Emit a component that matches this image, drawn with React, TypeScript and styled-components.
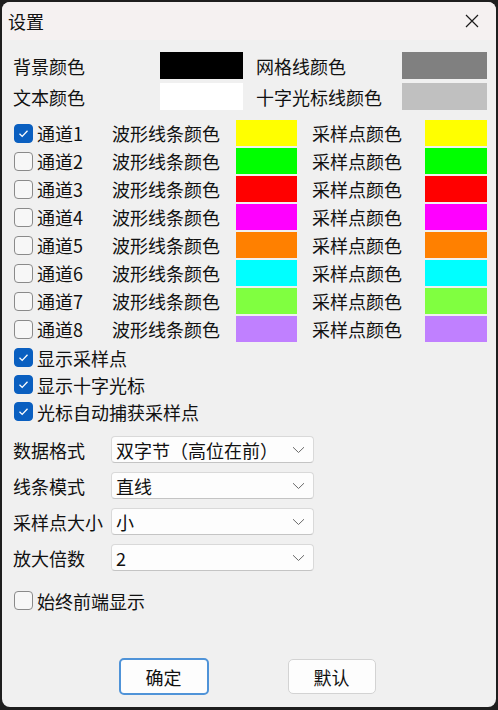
import React from "react";
import styled, { createGlobalStyle } from "styled-components";

const GlobalStyle = createGlobalStyle`
  html, body {
    margin: 0;
    padding: 0;
    background: #1e1e1e;
  }
  body {
    font-family: "Noto Sans CJK SC", "Noto Sans", sans-serif;
    color: #111111;
  }
  * { box-sizing: border-box; }
`;

const Page = styled.div`
  width: 498px;
  height: 710px;
  padding: 2px 2px 3px 2px;
`;

const Window = styled.div`
  width: 494px;
  height: 705px;
  background: #f0f0f0;
  border-radius: 8px;
  overflow: hidden;
  display: flex;
  flex-direction: column;
`;

const TitleBar = styled.div`
  height: 38px;
  background: #f5f1f1;
  display: flex;
  align-items: center;
  justify-content: space-between;
  padding: 0 14px 0 6px;
`;

const Title = styled.span`
  font-size: 18px;
  line-height: 1;
`;

const CloseButton = styled.div`
  width: 20px;
  height: 20px;
  display: flex;
  align-items: center;
  justify-content: center;
`;

const Body = styled.div`
  flex: 1;
  display: flex;
  flex-direction: column;
  padding: 0 9px 0 11px;
  font-size: 18px;
`;

const TopGrid = styled.div`
  margin-top: 12px;
  display: grid;
  grid-template-columns: 147px 96px 146px 85px;
  grid-auto-rows: 27px;
  row-gap: 4px;
  align-items: center;
`;

const Label = styled.span<{ $indent?: number }>`
  white-space: nowrap;
  line-height: 1;
  padding-left: ${(p) => p.$indent ?? 0}px;
`;

const Swatch = styled.div<{ $color: string; $w: number }>`
  width: ${(p) => p.$w}px;
  height: 100%;
  background: ${(p) => p.$color};
`;

const ChannelGrid = styled.div`
  margin-top: 10px;
  display: grid;
  grid-template-columns: 99px 124px 61px 128px 62px;
  grid-auto-rows: 26px;
  row-gap: 2px;
  align-items: center;
`;

const CheckRow = styled.label`
  display: flex;
  align-items: center;
  gap: 4px;
  height: 27px;
  white-space: nowrap;
  line-height: 1;
`;

const Box = styled.span<{ $checked: boolean }>`
  margin-left: 1px;
  width: 19px;
  height: 19px;
  border-radius: 4px;
  flex: none;
  display: flex;
  align-items: center;
  justify-content: center;
  background: ${(p) => (p.$checked ? "#0a5fc0" : "#f7f7f7")};
  border: 1px solid ${(p) => (p.$checked ? "#0a5fc0" : "#8a8a8a")};
`;

const OptionList = styled.div`
  margin-top: 2px;
  display: flex;
  flex-direction: column;
`;

const FormList = styled.div`
  margin-top: 11px;
  display: grid;
  grid-template-columns: 98px 203px;
  grid-auto-rows: 27px;
  row-gap: 9px;
  align-items: center;
`;

const Combo = styled.div`
  height: 27px;
  background: #fdfdfd;
  border: 1px solid #d9d9d9;
  border-bottom-color: #c4c4c4;
  border-radius: 4px;
  display: flex;
  align-items: center;
  justify-content: space-between;
  padding: 0 8px 0 4px;
  line-height: 1;
  white-space: nowrap;
`;

const BottomOption = styled.div`
  margin-top: 16px;
`;

const ButtonBar = styled.div`
  margin-top: 44px;
  display: flex;
  justify-content: center;
  gap: 79px;
  padding-right: 6px;
`;

const Button = styled.button<{ $primary?: boolean }>`
  width: ${(p) => (p.$primary ? 90 : 88)}px;
  height: ${(p) => (p.$primary ? 37 : 35)}px;
  margin-top: ${(p) => (p.$primary ? 0 : 1)}px;
  background: #fdfdfd;
  border: ${(p) => (p.$primary ? "2px solid #4f93d8" : "1px solid #d3d3d3")};
  border-radius: 5px;
  font-family: "Noto Sans CJK SC", "Noto Sans", sans-serif;
  font-size: 18px;
  color: #111111;
  padding: 0;
  line-height: 1;
`;

const CheckMark = () => (
  <svg width="13" height="13" viewBox="0 0 13 13">
    <path d="M2.5 6.8 L5.2 9.4 L10.5 3.8" fill="none" stroke="#ffffff" strokeWidth="1.3" />
  </svg>
);

const CheckBox = ({ checked, label }: { checked: boolean; label: string }) => (
  <CheckRow>
    <Box $checked={checked}>{checked && <CheckMark />}</Box>
    {label}
  </CheckRow>
);

const Chevron = () => (
  <svg width="13" height="8" viewBox="0 0 13 8">
    <path d="M1 1.2 L6.5 6.5 L12 1.2" fill="none" stroke="#6a6a6a" strokeWidth="1" />
  </svg>
);

const channels = [
  { c: "#ffff00", on: true },
  { c: "#00ff00", on: false },
  { c: "#ff0000", on: false },
  { c: "#ff00ff", on: false },
  { c: "#ff8000", on: false },
  { c: "#00ffff", on: false },
  { c: "#80ff40", on: false },
  { c: "#c080ff", on: false },
];

const forms = [
  { label: "数据格式", value: "双字节（高位在前）" },
  { label: "线条模式", value: "直线" },
  { label: "采样点大小", value: "小" },
  { label: "放大倍数", value: "2" },
];

export default function App() {
  return (
    <>
      <GlobalStyle />
      <Page>
        <Window>
          <TitleBar>
            <Title>设置</Title>
            <CloseButton>
              <svg width="14" height="14" viewBox="0 0 14 14">
                <path d="M1 1 L13 13 M13 1 L1 13" stroke="#1b1b1b" strokeWidth="1.2" />
              </svg>
            </CloseButton>
          </TitleBar>
          <Body>
            <TopGrid>
              <Label>背景颜色</Label>
              <Swatch $color="#000000" $w={83} />
              <Label>网格线颜色</Label>
              <Swatch $color="#808080" $w={85} />
              <Label>文本颜色</Label>
              <Swatch $color="#ffffff" $w={83} />
              <Label>十字光标线颜色</Label>
              <Swatch $color="#c0c0c0" $w={85} />
            </TopGrid>
            <ChannelGrid>
              {channels.map((ch, i) => (
                <React.Fragment key={i}>
                  <CheckBox checked={ch.on} label={`通道${i + 1}`} />
                  <Label>波形线条颜色</Label>
                  <Swatch $color={ch.c} $w={61} />
                  <Label $indent={15}>采样点颜色</Label>
                  <Swatch $color={ch.c} $w={62} />
                </React.Fragment>
              ))}
            </ChannelGrid>
            <OptionList>
              <CheckBox checked label="显示采样点" />
              <CheckBox checked label="显示十字光标" />
              <CheckBox checked label="光标自动捕获采样点" />
            </OptionList>
            <FormList>
              {forms.map((f) => (
                <React.Fragment key={f.label}>
                  <Label>{f.label}</Label>
                  <Combo>
                    <span>{f.value}</span>
                    <Chevron />
                  </Combo>
                </React.Fragment>
              ))}
            </FormList>
            <BottomOption>
              <CheckBox checked={false} label="始终前端显示" />
            </BottomOption>
            <ButtonBar>
              <Button $primary>确定</Button>
              <Button>默认</Button>
            </ButtonBar>
          </Body>
        </Window>
      </Page>
    </>
  );
}
